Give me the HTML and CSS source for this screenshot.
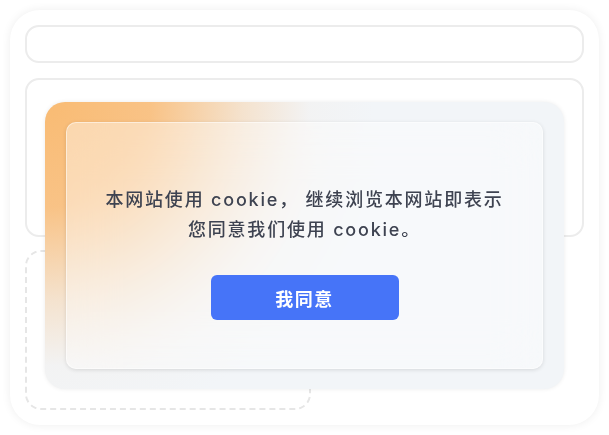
FILE: index.html
```html
<!DOCTYPE html>
<html lang="zh-CN">
<head>
    <meta charset="UTF-8">
    <meta name="viewport" content="width=device-width, initial-scale=1.0">
    <title>Cookie 提示</title>
    <link rel="stylesheet" href="styles.css">
</head>
<body>

<div class="frame">
    <div class="frame-bar"></div>
    <div class="frame-panel"></div>
    <div class="frame-drop"></div>

    <!-- cookie consent overlay -->
    <div class="consent">
        <div class="consent-card">
            <p class="consent-text">本网站使用 cookie， 继续浏览本网站即表示<br>您同意我们使用 cookie。</p>
            <button class="consent-btn">我同意</button>
        </div>
    </div>
</div>

</body>
</html>
```

FILE: styles.css
```css
body {
    margin: 0;
    padding: 0;
    background-color: #fff;
    font-family: Inter, "Noto Sans CJK SC", sans-serif;
}

.frame {
    position: relative;
    box-sizing: border-box;
    width: 589px;
    height: 415px;
    margin: 10px;
    padding: 15px;
    border-radius: 30px;
    background-color: #fff;
    box-shadow: 0 0 10px rgba(0, 0, 0, 0.07);
    display: flex;
    flex-direction: column;
}

.frame-bar {
    box-sizing: border-box;
    height: 38px;
    border: 2px solid #ececec;
    border-radius: 14px;
}

.frame-panel {
    box-sizing: border-box;
    height: 159px;
    margin-top: 15px;
    border: 2px solid #ececec;
    border-radius: 14px;
}

.frame-drop {
    box-sizing: border-box;
    width: 286px;
    height: 160px;
    margin-top: 13px;
    border: 2px dashed #e6e6e6;
    border-radius: 16px;
}

.consent {
    position: absolute;
    left: 35px;
    top: 92px;
    box-sizing: border-box;
    width: 519px;
    height: 287px;
    padding: 20px 21px;
    border-radius: 20px;
    background:
        radial-gradient(circle 330px at 0 0, rgba(249, 187, 115, 1) 0%, rgba(249, 192, 128, 0.95) 32%, rgba(246, 214, 178, 0.6) 60%, rgba(244, 236, 228, 0.25) 80%, rgba(243, 245, 248, 0) 100%),
        #f2f5f8;
    box-shadow: 0 0 4px rgba(0, 0, 0, 0.08);
}

.consent-card {
    box-sizing: border-box;
    height: 100%;
    padding-top: 62px;
    border-radius: 10px;
    background-color: rgba(255, 255, 255, 0.4);
    backdrop-filter: blur(24px);
    border: 1px solid rgba(255, 255, 255, 0.5);
    box-shadow: 0 1px 4px rgba(0, 0, 0, 0.12);
    display: flex;
    flex-direction: column;
    align-items: center;
}

.consent-text {
    margin: 0;
    font-size: 18px;
    font-weight: 500;
    line-height: 30px;
    letter-spacing: 1.8px;
    color: #3e4351;
    text-align: center;
    white-space: nowrap;
}

.consent-btn {
    width: 188px;
    height: 45px;
    margin-top: 30px;
    border: none;
    border-radius: 6px;
    background-color: #4674f8;
    color: #fff;
    font-family: inherit;
    font-size: 18px;
    font-weight: 600;
    letter-spacing: 1.5px;
    cursor: pointer;
}
```
